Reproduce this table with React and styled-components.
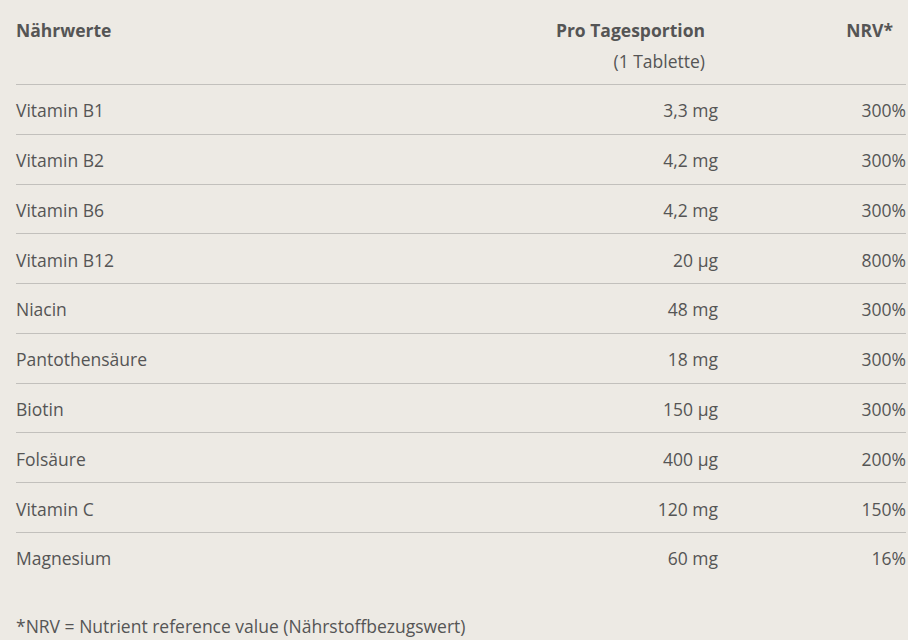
import React from "react";
import styled, { createGlobalStyle } from "styled-components";

const Global = createGlobalStyle`
  html, body { margin: 0; padding: 0; background: #edeae4; }
  body { font-family: "Open Sans", Lato, sans-serif; color: #555; }
`;

const Wrap = styled.div`
  padding: 16px 2px 0 16px;
`;

const Table = styled.table`
  width: 100%;
  border-collapse: collapse;
  font-size: 17.5px;
`;

const HeadCell = styled.th`
  font-weight: 700;
  text-align: ${(p) => (p.$right ? "right" : "left")};
  padding: ${(p) => (p.$right ? "0 13px 0 0" : "0")};
  vertical-align: top;
  height: 68px;
  line-height: 28px;
  color: #555;
`;

const Sub = styled.span`
  display: block;
  font-weight: 400;
  margin-top: 3px;
`;

const Row = styled.tr`
  border-top: 1px solid #c2c0bc;
`;

const Cell = styled.td`
  height: 46.78px;
  padding: 2px 0 0 0;
  text-align: ${(p) => (p.$right ? "right" : "left")};
  width: ${(p) => p.$w || "auto"};
`;

const Footer = styled.p`
  margin: 32px 0 0 0;
  font-size: 17.5px;
`;

const data = [
  ["Vitamin B1", "3,3 mg", "300%"],
  ["Vitamin B2", "4,2 mg", "300%"],
  ["Vitamin B6", "4,2 mg", "300%"],
  ["Vitamin B12", "20 µg", "800%"],
  ["Niacin", "48 mg", "300%"],
  ["Pantothensäure", "18 mg", "300%"],
  ["Biotin", "150 µg", "300%"],
  ["Folsäure", "400 µg", "200%"],
  ["Vitamin C", "120 mg", "150%"],
  ["Magnesium", "60 mg", "16%"],
];

export default function App() {
  return (
    <Wrap>
      <Global />
      <Table>
        <thead>
          <tr>
            <HeadCell>Nährwerte</HeadCell>
            <HeadCell $right>
              Pro Tagesportion
              <Sub>(1 Tablette)</Sub>
            </HeadCell>
            <HeadCell $right>NRV*</HeadCell>
          </tr>
        </thead>
        <tbody>
          {data.map(([n, a, v]) => (
            <Row key={n}>
              <Cell>{n}</Cell>
              <Cell $right $w="200px">{a}</Cell>
              <Cell $right $w="188px">{v}</Cell>
            </Row>
          ))}
        </tbody>
      </Table>
      <Footer>*NRV = Nutrient reference value (Nährstoffbezugswert)</Footer>
    </Wrap>
  );
}
